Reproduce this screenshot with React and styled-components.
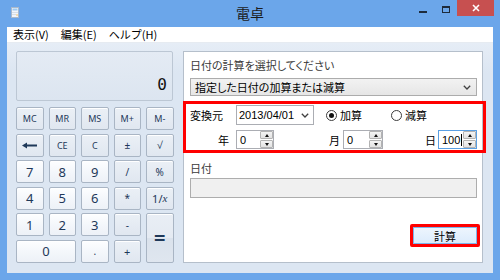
import React from "react";
import styled, { createGlobalStyle } from "styled-components";

const GlobalStyle = createGlobalStyle`
  html, body {
    margin: 0;
    padding: 0;
  }
  body {
    width: 500px;
    height: 280px;
    overflow: hidden;
    background: #6ba6ea;
    font-family: "Noto Sans CJK JP", "Noto Sans", sans-serif;
  }
`;

const Window = styled.div`
  width: 500px;
  height: 280px;
  display: flex;
  flex-direction: column;
  background: #6ba6ea;
`;

const TitleBar = styled.div`
  height: 27px;
  flex: none;
  display: grid;
  grid-template-columns: 1fr auto 1fr;
  align-items: start;
`;

const TitleIcon = styled.div`
  padding: 7px 0 0 11px;
  line-height: 0;
`;

const Title = styled.div`
  font-size: 14px;
  line-height: 26px;
  color: #1b1b1b;
`;

const Controls = styled.div`
  justify-self: end;
  margin-right: 6px;
  display: flex;
`;

const ControlButton = styled.div`
  width: ${(p) => p.$w}px;
  height: 16px;
  display: flex;
  align-items: center;
  justify-content: center;
  background: ${(p) => (p.$close ? "#c75050" : "transparent")};
`;

const Client = styled.div`
  flex: 1;
  margin: 0 7px 8px;
  display: flex;
  flex-direction: column;
  background: #dce6f2;
`;

const MenuBar = styled.div`
  height: 15px;
  flex: none;
  display: flex;
  gap: 12px;
  padding-left: 6px;
  background: #fff;
  border-bottom: 1px solid #e6ebf1;
`;

const MenuItem = styled.span`
  font-size: 11px;
  line-height: 15px;
  color: #000;
`;

const Body = styled.div`
  flex: 1;
  display: flex;
  gap: 10px;
  padding: 8px 10px 10px 9px;
  background: linear-gradient(#e6edf6, #dce6f2 30px);
`;

const LeftColumn = styled.div`
  width: 157px;
  flex: none;
  display: flex;
  flex-direction: column;
`;

const Display = styled.div`
  height: 48px;
  border: 1px solid #bcc7d4;
  border-radius: 2px;
  background: linear-gradient(#e4ebf4, #dce5f0);
  display: flex;
  align-items: flex-end;
  justify-content: flex-end;
  padding: 0 5px 7px 0;
  box-sizing: border-box;
  height: 50px;
  font-family: "DejaVu Sans Mono", "Liberation Mono", monospace;
  font-size: 16px;
  line-height: 16px;
  color: #111;
`;

const Keypad = styled.div`
  margin-top: 6px;
  display: grid;
  grid-template-columns: repeat(5, 27.5px);
  grid-template-rows: repeat(6, 23px);
  column-gap: 5px;
  row-gap: 3.5px;
`;

const Key = styled.div`
  grid-column: ${(p) => (p.$wide ? "span 2" : "auto")};
  grid-row: ${(p) => (p.$tall ? "span 2" : "auto")};
  box-sizing: border-box;
  border: 1px solid #a9b5c4;
  border-radius: 2px;
  display: flex;
  align-items: center;
  justify-content: center;
  font-family: "Noto Sans", "Open Sans", sans-serif;
  font-size: ${(p) => p.$size || 9}px;
  font-weight: ${(p) => (p.$bold ? 700 : 400)};
  color: #1e3859;
  background: ${(p) =>
    p.$digit
      ? "linear-gradient(#fdfeff, #f4f7fb 50%, #edf1f7)"
      : p.$tall
      ? "linear-gradient(#e9eef5, #e4eaf2 50%, #dae2ec 50%, #dfe6ef)"
      : "linear-gradient(#ebf0f6, #e0e7f0)"};
  box-shadow: inset 0 1px 0 #fff;
`;

const Italic = styled.i`
  font-family: "Liberation Serif", serif;
  font-size: 11px;
`;

const Panel = styled.div`
  flex: 1;
  display: flex;
  flex-direction: column;
  background: #fff;
  border: 1px solid #b5bfcb;
  padding: 0 5px 0 6px;
  font-size: 11px;
  color: #000;
`;

const PanelLabel = styled.div`
  margin-top: ${(p) => p.$top}px;
  line-height: 16px;
  font-size: 11px;
  color: #3a3a3a;
  font-feature-settings: "palt";
`;

const Combo = styled.div`
  margin-top: 5px;
  height: 18px;
  box-sizing: border-box;
  border: 1px solid #acacac;
  background: linear-gradient(#f2f2f2, #e6e6e6);
  display: flex;
  align-items: center;
  justify-content: space-between;
  padding: 0 5px 0 4px;
  font-size: 11px;
  color: #000;
  font-feature-settings: "palt";
`;

const Annotation = styled.div`
  margin: 5px -9px 0 -7px;
  border: 3px solid #ff0000;
  padding: 1px 0 1px 4px;
  display: flex;
  flex-direction: column;
  gap: 5px;
`;

const Row = styled.div`
  height: ${(p) => p.$h}px;
  display: flex;
  align-items: center;
`;

const FieldLabel = styled.div`
  width: ${(p) => p.$w}px;
  flex: none;
  box-sizing: border-box;
  text-align: ${(p) => (p.$right ? "right" : "left")};
  padding-right: ${(p) => p.$pr || 0}px;
  font-size: 11px;
  line-height: 16px;
  color: #000;
`;

const DateCombo = styled.div`
  width: 78px;
  height: 20px;
  flex: none;
  box-sizing: border-box;
  border: 1px solid #abadb3;
  background: #fff;
  display: flex;
  align-items: center;
  justify-content: space-between;
  padding: 0 4px 0 2px;
  font-family: "Liberation Sans", Arial, sans-serif;
  font-size: 11px;
  color: #000;
`;

const RadioItem = styled.label`
  width: 65px;
  flex: none;
  display: flex;
  align-items: center;
  gap: 3px;
  font-size: 11px;
  color: #000;
`;

const RadioCircle = styled.span`
  width: 11px;
  height: 11px;
  box-sizing: border-box;
  border-radius: 50%;
  border: 1px solid #3c3c3c;
  background: #fff;
  display: flex;
  align-items: center;
  justify-content: center;
  &::after {
    content: "";
    width: 5px;
    height: 5px;
    border-radius: 50%;
    background: ${(p) => (p.$on ? "#111" : "transparent")};
  }
`;

const Spin = styled.div`
  width: ${(p) => p.$w}px;
  height: 19px;
  flex: none;
  box-sizing: border-box;
  border: 1px solid ${(p) => (p.$focus ? "#5a9fe3" : "#abadb3")};
  background: #fff;
  display: flex;
`;

const SpinValue = styled.div`
  flex: 1;
  display: flex;
  align-items: center;
  padding-left: 3px;
  font-family: "Liberation Sans", Arial, sans-serif;
  font-size: 11px;
  color: #000;
`;

const Caret = styled.span`
  width: 1px;
  height: 12px;
  background: #000;
  margin-left: 1px;
`;

const SpinButtons = styled.div`
  width: 13px;
  display: flex;
  flex-direction: column;
  gap: 1px;
  padding: 0 0 0 0;
`;

const SpinButton = styled.div`
  flex: 1;
  border: 1px solid #b3b3b3;
  border-radius: 1px;
  background: linear-gradient(#f4f4f4, #e2e2e2);
  display: flex;
  align-items: center;
  justify-content: center;
`;

const Arrow = styled.span`
  width: 0;
  height: 0;
  border-left: 2.5px solid transparent;
  border-right: 2.5px solid transparent;
  ${(p) =>
    p.$down ? "border-top: 3px solid #111;" : "border-bottom: 3px solid #111;"}
`;

const ResultField = styled.div`
  margin-top: 2px;
  height: 20px;
  box-sizing: border-box;
  border: 1px solid #adadad;
  background: #f0f0f0;
`;

const ButtonMark = styled.div`
  margin: 26px -3px 0 0;
  align-self: flex-end;
  border: 3px solid #ff0000;
  border-radius: 2px;
  display: flex;
`;

const ActionButton = styled.div`
  width: 62px;
  height: 15px;
  border: 1px solid #7eb4ea;
  background: linear-gradient(#edf5fd, #dcecfc);
  display: flex;
  align-items: center;
  justify-content: center;
  font-size: 11px;
  color: #000;
`;

const Chevron = () => (
  <svg width="8" height="5" viewBox="0 0 8 5">
    <path d="M0.8 0.8 L4 4 L7.2 0.8" fill="none" stroke="#404040" strokeWidth="1.3" />
  </svg>
);

const BackArrow = () => (
  <svg width="15" height="7" viewBox="0 0 15 7">
    <path d="M0 3.5 L5 0.5 V6.5 Z" fill="#1e3859" />
    <rect x="4" y="2.5" width="11" height="2" fill="#1e3859" />
  </svg>
);

const CalcIcon = () => (
  <svg width="8" height="11" viewBox="0 0 8 11">
    <rect x="0.5" y="0.5" width="7" height="10" fill="#f1f5fa" stroke="#a9b9cc" />
    <rect x="1.5" y="1.5" width="5" height="2" fill="#9fcaf0" />
    <g fill="#b8c6d6">
      <rect x="1.5" y="5" width="1" height="1" />
      <rect x="3.5" y="5" width="1" height="1" />
      <rect x="5.5" y="5" width="1" height="1" />
      <rect x="1.5" y="7" width="1" height="1" />
      <rect x="3.5" y="7" width="1" height="1" />
      <rect x="5.5" y="7" width="1" height="2" fill="#f2c46e" />
    </g>
  </svg>
);

const keys = [
  { l: "MC" }, { l: "MR" }, { l: "MS" }, { l: "M+" }, { l: "M-" },
  { l: <BackArrow /> }, { l: "CE" }, { l: "C" }, { l: "±", size: 10 }, { l: "√", size: 10 },
  { l: "7", d: 1 }, { l: "8", d: 1 }, { l: "9", d: 1 }, { l: "/", size: 10 }, { l: "%", size: 10 },
  { l: "4", d: 1 }, { l: "5", d: 1 }, { l: "6", d: 1 }, { l: "*", size: 10 },
  { l: <>1/<Italic>x</Italic></>, size: 11 },
  { l: "1", d: 1 }, { l: "2", d: 1 }, { l: "3", d: 1 }, { l: "-", size: 10 },
  { l: "=", size: 20, tall: 1, bold: 1 },
  { l: "0", d: 1, wide: 1 }, { l: ".", d: 1, size: 10 }, { l: "+", size: 11 },
];

const Spinner = ({ w, value, focus }) => (
  <Spin $w={w} $focus={focus}>
    <SpinValue>
      {value}
      {focus && <Caret />}
    </SpinValue>
    <SpinButtons>
      <SpinButton>
        <Arrow />
      </SpinButton>
      <SpinButton>
        <Arrow $down />
      </SpinButton>
    </SpinButtons>
  </Spin>
);

export default function App() {
  return (
    <Window>
      <GlobalStyle />
      <TitleBar>
        <TitleIcon>
          <CalcIcon />
        </TitleIcon>
        <Title>電卓</Title>
        <Controls>
          <ControlButton $w={23}>
            <svg width="8" height="16" viewBox="0 0 8 16">
              <rect x="0" y="11" width="8" height="2" fill="#1d2b3c" />
            </svg>
          </ControlButton>
          <ControlButton $w={23}>
            <svg width="8" height="16" viewBox="0 0 8 16">
              <rect x="0.5" y="6.5" width="7" height="6" fill="none" stroke="#1d2b3c" />
              <rect x="0" y="6" width="8" height="2" fill="#1d2b3c" />
            </svg>
          </ControlButton>
          <ControlButton $w={37} $close>
            <svg width="8" height="8" viewBox="0 0 8 8">
              <path d="M1 1 L7 7 M7 1 L1 7" stroke="#fff" strokeWidth="1.6" />
            </svg>
          </ControlButton>
        </Controls>
      </TitleBar>
      <Client>
        <MenuBar>
          <MenuItem>表示(V)</MenuItem>
          <MenuItem>編集(E)</MenuItem>
          <MenuItem>ヘルプ(H)</MenuItem>
        </MenuBar>
        <Body>
          <LeftColumn>
            <Display>0</Display>
            <Keypad>
              {keys.map((k, i) => (
                <Key
                  key={i}
                  $digit={k.d}
                  $wide={k.wide}
                  $tall={k.tall}
                  $bold={k.bold}
                  $size={k.size || (k.d ? 13 : 9)}
                >
                  {k.l}
                </Key>
              ))}
            </Keypad>
          </LeftColumn>
          <Panel>
            <PanelLabel $top={5}>日付の計算を選択してください</PanelLabel>
            <Combo>
              <span>指定した日付の加算または減算</span>
              <Chevron />
            </Combo>
            <Annotation>
              <Row $h={20}>
                <FieldLabel $w={46}>変換元</FieldLabel>
                <DateCombo>
                  <span>2013/04/01</span>
                  <Chevron />
                </DateCombo>
                <div style={{ width: 12 }} />
                <RadioItem>
                  <RadioCircle $on />
                  加算
                </RadioItem>
                <RadioItem>
                  <RadioCircle />
                  減算
                </RadioItem>
              </Row>
              <Row $h={19}>
                <FieldLabel $w={46} $right $pr={7}>年</FieldLabel>
                <Spinner w={38} value="0" />
                <FieldLabel $w={69} $right $pr={3}>月</FieldLabel>
                <Spinner w={40} value="0" />
                <FieldLabel $w={55} $right $pr={2}>日</FieldLabel>
                <Spinner w={39} value="100" focus />
              </Row>
            </Annotation>
            <PanelLabel $top={7}>日付</PanelLabel>
            <ResultField />
            <ButtonMark>
              <ActionButton>計算</ActionButton>
            </ButtonMark>
          </Panel>
        </Body>
      </Client>
    </Window>
  );
}
